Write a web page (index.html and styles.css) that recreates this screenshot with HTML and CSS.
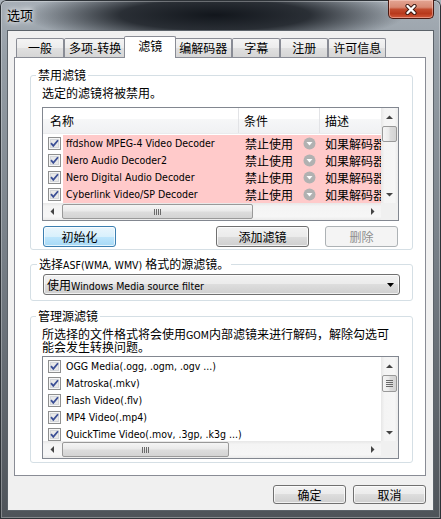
FILE: index.html
```html
<!DOCTYPE html>
<html lang="zh-CN">
<head>
    <meta charset="UTF-8">
    <meta name="viewport" content="width=device-width, initial-scale=1.0">
    <link rel="stylesheet" href="styles.css">
</head>
<body>
    <div class="window">
        <div class="titlebar">
            <span class="title">选项</span>
            <button type="button" class="close-btn">
                <svg width="14" height="11" viewBox="0 0 14 11"><path d="M3.5 2L10.5 9M10.5 2L3.5 9" stroke="#3b1710" stroke-width="4.2" stroke-linecap="round"/><path d="M3.5 2L10.5 9M10.5 2L3.5 9" stroke="#fff" stroke-width="2.4" stroke-linecap="round"/></svg>
            </button>
        </div>

        <div class="client">
            <div class="tabs">
                <div class="tab">一般</div>
                <div class="tab">多项-转换</div>
                <div class="tab active">滤镜</div>
                <div class="tab">编解码器</div>
                <div class="tab">字幕</div>
                <div class="tab">注册</div>
                <div class="tab">许可信息</div>
            </div>

            <div class="panel">
                <!-- disabled filters -->
                <fieldset class="group group-disabled">
                    <legend>禁用滤镜</legend>
                    <p class="desc">选定的滤镜将被禁用。</p>
                    <div class="list list-filters">
                        <div class="list-main">
                            <div class="list-header">
                                <div class="col-name">名称</div>
                                <div class="col-cond">条件</div>
                                <div class="col-desc">描述</div>
                            </div>
                            <div class="rows">
                                <div class="row">
                                    <span class="check"><svg width="13" height="13" viewBox="0 0 13 13"><rect x="0.5" y="0.5" width="12" height="12" fill="#f6f6f6" stroke="#8e8f8f"/><rect x="2.5" y="2.5" width="8" height="8" fill="#e8e8e8" stroke="#d3d6da"/><path d="M3 6.2l2.3 2.7L10 3.2" fill="none" stroke="#3b4f96" stroke-width="1.8"/></svg></span>
                                    <div class="cells">
                                        <span class="col-name en">ffdshow MPEG-4 Video Decoder</span>
                                        <span class="col-cond">禁止使用<svg class="cond-icon" width="13" height="13" viewBox="0 0 13 13"><circle cx="6.5" cy="6.5" r="6" fill="#b1b1b1"/><path d="M3.5 5h6l-3 3.5z" fill="#fff"/></svg></span>
                                        <span class="col-desc">如果解码器出现问题</span>
                                    </div>
                                </div>
                                <div class="row">
                                    <span class="check"><svg width="13" height="13" viewBox="0 0 13 13"><rect x="0.5" y="0.5" width="12" height="12" fill="#f6f6f6" stroke="#8e8f8f"/><rect x="2.5" y="2.5" width="8" height="8" fill="#e8e8e8" stroke="#d3d6da"/><path d="M3 6.2l2.3 2.7L10 3.2" fill="none" stroke="#3b4f96" stroke-width="1.8"/></svg></span>
                                    <div class="cells">
                                        <span class="col-name en">Nero Audio Decoder2</span>
                                        <span class="col-cond">禁止使用<svg class="cond-icon" width="13" height="13" viewBox="0 0 13 13"><circle cx="6.5" cy="6.5" r="6" fill="#b1b1b1"/><path d="M3.5 5h6l-3 3.5z" fill="#fff"/></svg></span>
                                        <span class="col-desc">如果解码器出现问题</span>
                                    </div>
                                </div>
                                <div class="row">
                                    <span class="check"><svg width="13" height="13" viewBox="0 0 13 13"><rect x="0.5" y="0.5" width="12" height="12" fill="#f6f6f6" stroke="#8e8f8f"/><rect x="2.5" y="2.5" width="8" height="8" fill="#e8e8e8" stroke="#d3d6da"/><path d="M3 6.2l2.3 2.7L10 3.2" fill="none" stroke="#3b4f96" stroke-width="1.8"/></svg></span>
                                    <div class="cells">
                                        <span class="col-name en">Nero Digital Audio Decoder</span>
                                        <span class="col-cond">禁止使用<svg class="cond-icon" width="13" height="13" viewBox="0 0 13 13"><circle cx="6.5" cy="6.5" r="6" fill="#b1b1b1"/><path d="M3.5 5h6l-3 3.5z" fill="#fff"/></svg></span>
                                        <span class="col-desc">如果解码器出现问题</span>
                                    </div>
                                </div>
                                <div class="row">
                                    <span class="check"><svg width="13" height="13" viewBox="0 0 13 13"><rect x="0.5" y="0.5" width="12" height="12" fill="#f6f6f6" stroke="#8e8f8f"/><rect x="2.5" y="2.5" width="8" height="8" fill="#e8e8e8" stroke="#d3d6da"/><path d="M3 6.2l2.3 2.7L10 3.2" fill="none" stroke="#3b4f96" stroke-width="1.8"/></svg></span>
                                    <div class="cells">
                                        <span class="col-name en">Cyberlink Video/SP Decoder</span>
                                        <span class="col-cond">禁止使用<svg class="cond-icon" width="13" height="13" viewBox="0 0 13 13"><circle cx="6.5" cy="6.5" r="6" fill="#b1b1b1"/><path d="M3.5 5h6l-3 3.5z" fill="#fff"/></svg></span>
                                        <span class="col-desc">如果解码器出现问题</span>
                                    </div>
                                </div>
                            </div>
                        </div>
                        <div class="vscroll">
                            <span class="sb-btn"><svg width="7" height="4" viewBox="0 0 7 4"><path d="M0 4h7L3.5 0.5z" fill="#444"/></svg></span>
                            <div class="sb-track"><div class="thumb"></div></div>
                            <span class="sb-btn"><svg width="7" height="4" viewBox="0 0 7 4"><path d="M0 0h7L3.5 3.5z" fill="#444"/></svg></span>
                        </div>
                        <div class="hscroll">
                            <span class="sb-btn"><svg width="4" height="7" viewBox="0 0 4 7"><path d="M4 0v7L0.5 3.5z" fill="#444"/></svg></span>
                            <div class="sb-track">
                                <div class="thumb">
                                    <svg width="7" height="6" viewBox="0 0 7 6"><path d="M0.5 0v6M2.5 0v6M4.5 0v6M6.5 0v6" stroke="#6a6a6a"/></svg>
                                </div>
                            </div>
                            <span class="sb-btn"><svg width="4" height="7" viewBox="0 0 4 7"><path d="M0 0v7L3.5 3.5z" fill="#444"/></svg></span>
                        </div>
                        <div class="corner"></div>
                    </div>
                    <div class="group-buttons">
                        <button type="button" class="btn btn-hot btn-init">初始化</button>
                        <button type="button" class="btn btn-add">添加滤镜</button>
                        <button type="button" class="btn btn-del" disabled>删除</button>
                    </div>
                </fieldset>

                <!-- asf source filter -->
                <fieldset class="group group-asf">
                    <legend>选择<span class="en">ASF(WMA, WMV) </span>格式的源滤镜。</legend>
                    <div class="combo">
                        <span>使用<span class="en">Windows Media source filter</span></span>
                        <svg width="7" height="4" viewBox="0 0 7 4"><path d="M0 0h7L3.5 4z" fill="#000"/></svg>
                    </div>
                </fieldset>

                <!-- source filters -->
                <fieldset class="group group-source">
                    <legend>管理源滤镜</legend>
                    <p class="desc">所选择的文件格式将会使用<span class="en">GOM</span>内部滤镜来进行解码，解除勾选可<br>能会发生转换问题。</p>
                    <div class="list list-sources">
                        <div class="list-main">
                            <div class="rows">
                                <div class="row">
                                    <span class="check"><svg width="13" height="13" viewBox="0 0 13 13"><rect x="0.5" y="0.5" width="12" height="12" fill="#f6f6f6" stroke="#8e8f8f"/><rect x="2.5" y="2.5" width="8" height="8" fill="#e8e8e8" stroke="#d3d6da"/><path d="M3 6.2l2.3 2.7L10 3.2" fill="none" stroke="#3b4f96" stroke-width="1.8"/></svg></span>
                                    <span class="col-name en">OGG Media(.ogg, .ogm, .ogv ...)</span>
                                </div>
                                <div class="row">
                                    <span class="check"><svg width="13" height="13" viewBox="0 0 13 13"><rect x="0.5" y="0.5" width="12" height="12" fill="#f6f6f6" stroke="#8e8f8f"/><rect x="2.5" y="2.5" width="8" height="8" fill="#e8e8e8" stroke="#d3d6da"/><path d="M3 6.2l2.3 2.7L10 3.2" fill="none" stroke="#3b4f96" stroke-width="1.8"/></svg></span>
                                    <span class="col-name en">Matroska(.mkv)</span>
                                </div>
                                <div class="row">
                                    <span class="check"><svg width="13" height="13" viewBox="0 0 13 13"><rect x="0.5" y="0.5" width="12" height="12" fill="#f6f6f6" stroke="#8e8f8f"/><rect x="2.5" y="2.5" width="8" height="8" fill="#e8e8e8" stroke="#d3d6da"/><path d="M3 6.2l2.3 2.7L10 3.2" fill="none" stroke="#3b4f96" stroke-width="1.8"/></svg></span>
                                    <span class="col-name en">Flash Video(.flv)</span>
                                </div>
                                <div class="row">
                                    <span class="check"><svg width="13" height="13" viewBox="0 0 13 13"><rect x="0.5" y="0.5" width="12" height="12" fill="#f6f6f6" stroke="#8e8f8f"/><rect x="2.5" y="2.5" width="8" height="8" fill="#e8e8e8" stroke="#d3d6da"/><path d="M3 6.2l2.3 2.7L10 3.2" fill="none" stroke="#3b4f96" stroke-width="1.8"/></svg></span>
                                    <span class="col-name en">MP4 Video(.mp4)</span>
                                </div>
                                <div class="row">
                                    <span class="check"><svg width="13" height="13" viewBox="0 0 13 13"><rect x="0.5" y="0.5" width="12" height="12" fill="#f6f6f6" stroke="#8e8f8f"/><rect x="2.5" y="2.5" width="8" height="8" fill="#e8e8e8" stroke="#d3d6da"/><path d="M3 6.2l2.3 2.7L10 3.2" fill="none" stroke="#3b4f96" stroke-width="1.8"/></svg></span>
                                    <span class="col-name en">QuickTime Video(.mov, .3gp, .k3g ...)</span>
                                </div>
                            </div>
                        </div>
                        <div class="vscroll">
                            <span class="sb-btn"><svg width="7" height="4" viewBox="0 0 7 4"><path d="M0 4h7L3.5 0.5z" fill="#444"/></svg></span>
                            <div class="sb-track">
                                <div class="thumb">
                                    <svg width="7" height="7" viewBox="0 0 7 7"><path d="M0 0.5h7M0 2.5h7M0 4.5h7M0 6.5h7" stroke="#6a6a6a"/></svg>
                                </div>
                            </div>
                            <span class="sb-btn"><svg width="7" height="4" viewBox="0 0 7 4"><path d="M0 0h7L3.5 3.5z" fill="#444"/></svg></span>
                        </div>
                        <div class="hscroll">
                            <span class="sb-btn"><svg width="4" height="7" viewBox="0 0 4 7"><path d="M4 0v7L0.5 3.5z" fill="#444"/></svg></span>
                            <div class="sb-track">
                                <div class="thumb">
                                    <svg width="7" height="6" viewBox="0 0 7 6"><path d="M0.5 0v6M2.5 0v6M4.5 0v6M6.5 0v6" stroke="#6a6a6a"/></svg>
                                </div>
                            </div>
                            <span class="sb-btn"><svg width="4" height="7" viewBox="0 0 4 7"><path d="M0 0v7L3.5 3.5z" fill="#444"/></svg></span>
                        </div>
                        <div class="corner"></div>
                    </div>
                </fieldset>
            </div>

            <div class="footer">
                <button type="button" class="btn btn-dlg">确定</button>
                <button type="button" class="btn btn-dlg">取消</button>
            </div>
        </div>
    </div>
</body>
</html>
```

FILE: styles.css
```css
body {
    margin: 0;
    background: #aab2ba;
    font-family: "Noto Sans CJK SC", sans-serif;
    font-size: 12px;
    color: #000;
}

/* latin runs use a narrower face, like Tahoma next to the CJK font */
.en {
    font-family: "DejaVu Sans Condensed", "DejaVu Sans", sans-serif;
    font-stretch: condensed;
    font-size: 10.5px;
    line-height: 0;
}

/* window frame */
.window {
    width: 441px;
    height: 519px;
    box-sizing: border-box;
    padding: 0 7px 8px;
    display: flex;
    flex-direction: column;
    border-radius: 6px 6px 0 0;
    background:
        radial-gradient(ellipse 190px 30px at 215px 15px, rgba(12, 16, 22, 0.96), rgba(12, 16, 22, 0.8) 50%, rgba(12, 16, 22, 0) 100%),
        linear-gradient(#a7afb7, #959ea6 60px, #767e86 260px, #4e5359);
    box-shadow: inset 0 0 0 1px #2d3237, inset 0 0 0 2px rgba(255, 255, 255, 0.3);
}

.titlebar {
    height: 30px;
    flex-shrink: 0;
    display: flex;
    justify-content: space-between;
    align-items: flex-start;
}

.title {
    font-size: 13px;
    line-height: 30px;
    text-shadow: 0 0 5px #fff, 0 0 9px rgba(255, 255, 255, 0.8);
}

.close-btn {
    width: 46px;
    height: 19px;
    padding: 0;
    border: 1px solid #4a1a12;
    border-top: none;
    border-radius: 0 0 5px 5px;
    background: linear-gradient(#e3a593, #d88a74 40%, #c24c2f 52%, #b8391c 75%, #d2583a);
    box-shadow: inset 0 0 0 1px rgba(255, 220, 210, 0.45);
    display: flex;
    align-items: center;
    justify-content: center;
}

.client {
    flex: 1;
    background: #f0f0f0;
    border: 1px solid #5b6269;
    display: flex;
    flex-direction: column;
}

/* tabs */
.tabs {
    display: flex;
    align-items: flex-end;
    margin: 5px 0 0 8px;
}

.tab {
    box-sizing: border-box;
    min-width: 48px;
    height: 19px;
    padding: 0 4px;
    border: 1px solid #898c95;
    border-bottom: none;
    border-radius: 2px 2px 0 0;
    background: linear-gradient(#f4f4f4, #ececec 50%, #e0e0e0 50%, #d6d6d6);
    text-align: center;
    line-height: 18px;
    white-space: nowrap;
}

.tab.active {
    min-width: 52px;
    height: 22px;
    margin: 0 -2px -1px;
    background: #fff;
    position: relative;
    z-index: 1;
}

.panel {
    box-sizing: border-box;
    height: 419px;
    margin: 0 7px 0 6px;
    padding: 10px 12px 0 15px;
    border: 1px solid #898c95;
    background: #fff;
}

/* group boxes */
.group {
    margin: 0;
    min-width: 0;
    border: 1px solid #d5dfe5;
    border-radius: 3px;
}

.group legend {
    margin-left: -6px;
    padding: 0 2px;
    line-height: 14px;
}

.group-disabled {
    padding: 4px 13px 2px 11px;
}

.group-asf {
    margin-top: 7px;
    padding: 3px 12px 5px 12px;
}

.group-source {
    margin-top: 8px;
    padding: 4px 13px 3px 11px;
}

.desc {
    margin: 0;
    line-height: 14px;
}

.group-source .desc {
    line-height: 13px;
}

/* list views */
.list {
    box-sizing: border-box;
    display: grid;
    grid-template-columns: 1fr 17px;
    grid-template-rows: 1fr 17px;
    border: 1px solid #828790;
    background: #fff;
}

.list-filters {
    height: 114px;
    margin-top: 7px;
}

.list-sources {
    height: 103px;
    margin-top: 3px;
}

.list-main {
    overflow: hidden;
    min-width: 0;
    min-height: 0;
}

.list-header {
    display: flex;
    height: 26px;
    box-sizing: border-box;
    border-bottom: 1px solid #eaebed;
    background: linear-gradient(#fff, #fff 45%, #f6f7f8 45%, #f0f1f3);
    white-space: nowrap;
}

.list-header > div {
    flex-shrink: 0;
    box-sizing: border-box;
    line-height: 25px;
    border-right: 1px solid #e2e3e6;
}

.list-header .col-name {
    width: 196px;
    padding-left: 7px;
}

.list-header .col-cond {
    width: 81px;
    padding-left: 5px;
}

.list-header .col-desc {
    width: 150px;
    padding-left: 5px;
    border-right: none;
}

.rows {
    padding-top: 1px;
}

.row {
    display: flex;
    align-items: center;
    height: 17px;
    white-space: nowrap;
}

.check {
    flex-shrink: 0;
    box-sizing: border-box;
    width: 20px;
    height: 13px;
    padding-left: 5px;
    display: flex;
}

.cells {
    display: flex;
    align-items: center;
    height: 17px;
    background: #ffcaca;
}

.row .col-name {
    flex-shrink: 0;
    line-height: 17px;
    padding-left: 3px;
}

.cells .col-name {
    box-sizing: border-box;
    width: 176px;
}

.cells .col-cond {
    flex-shrink: 0;
    box-sizing: border-box;
    width: 81px;
    padding-left: 6px;
    display: flex;
    align-items: center;
    line-height: 17px;
}

.cond-icon {
    margin-left: 10px;
}

.cells .col-desc {
    flex-shrink: 0;
    width: 150px;
    padding-left: 5px;
    line-height: 17px;
}

/* scroll bars */
.vscroll {
    display: flex;
    flex-direction: column;
    background: linear-gradient(to right, #e7e7e7, #f4f4f4 20%, #f6f6f6 80%, #ebebeb);
}

.hscroll {
    display: flex;
    background: linear-gradient(#e7e7e7, #f4f4f4 20%, #f6f6f6 80%, #ebebeb);
}

.sb-btn {
    flex: 0 0 17px;
    display: flex;
    align-items: center;
    justify-content: center;
}

.sb-track {
    flex: 1;
    display: flex;
}

.vscroll .sb-track {
    flex-direction: column;
}

.thumb {
    box-sizing: border-box;
    border: 1px solid #999;
    border-radius: 2px;
    display: flex;
    align-items: center;
    justify-content: center;
}

.vscroll .thumb {
    height: 17px;
    margin: 1px 1px 0;
    background: linear-gradient(to right, #f5f5f5, #eaeaea 45%, #dcdcdc 55%, #d3d3d3);
}

.list-filters .vscroll .thumb {
    height: 16px;
}

.hscroll .thumb {
    height: 15px;
    margin: 1px 0 0 2px;
    background: linear-gradient(#f5f5f5, #eaeaea 45%, #dcdcdc 55%, #d3d3d3);
}

.list-filters .hscroll .thumb {
    width: 191px;
}

.list-sources .hscroll .thumb {
    width: 167px;
}

.corner {
    background: #f0f0f0;
}

/* buttons */
.btn {
    box-sizing: border-box;
    height: 21px;
    padding: 0;
    border: 1px solid #707070;
    border-radius: 3px;
    background: linear-gradient(#f2f2f2, #ebebeb 50%, #dddddd 50%, #cfcfcf);
    box-shadow: inset 0 0 0 1px rgba(255, 255, 255, 0.7);
    font: inherit;
    line-height: 19px;
    color: #000;
}

.btn-hot {
    border-color: #3c7fb1;
    background: linear-gradient(#eaf6fd, #d9f0fc 50%, #bee6fd 50%, #a7d9f5);
}

.btn:disabled {
    border-color: #adb2b5;
    background: #f4f4f4;
    box-shadow: none;
    color: #8d8d8d;
}

.group-buttons {
    display: flex;
    margin-top: 5px;
    padding: 0 1px;
}

.btn-init {
    width: 73px;
}

.btn-add {
    width: 93px;
    margin-left: auto;
}

.btn-del {
    width: 73px;
    margin-left: 16px;
}

.combo {
    box-sizing: border-box;
    height: 21px;
    padding: 0 5px 0 3px;
    display: flex;
    align-items: center;
    justify-content: space-between;
    border: 1px solid #707070;
    border-radius: 3px;
    background: linear-gradient(#f2f2f2, #ebebeb 50%, #dddddd 50%, #cfcfcf);
    box-shadow: inset 0 0 0 1px rgba(255, 255, 255, 0.7);
    line-height: 19px;
    white-space: nowrap;
}

.footer {
    display: flex;
    justify-content: flex-end;
    gap: 7px;
    margin: 9px 7px 0 0;
}

.btn-dlg {
    width: 73px;
    height: 19px;
    line-height: 17px;
}
```
